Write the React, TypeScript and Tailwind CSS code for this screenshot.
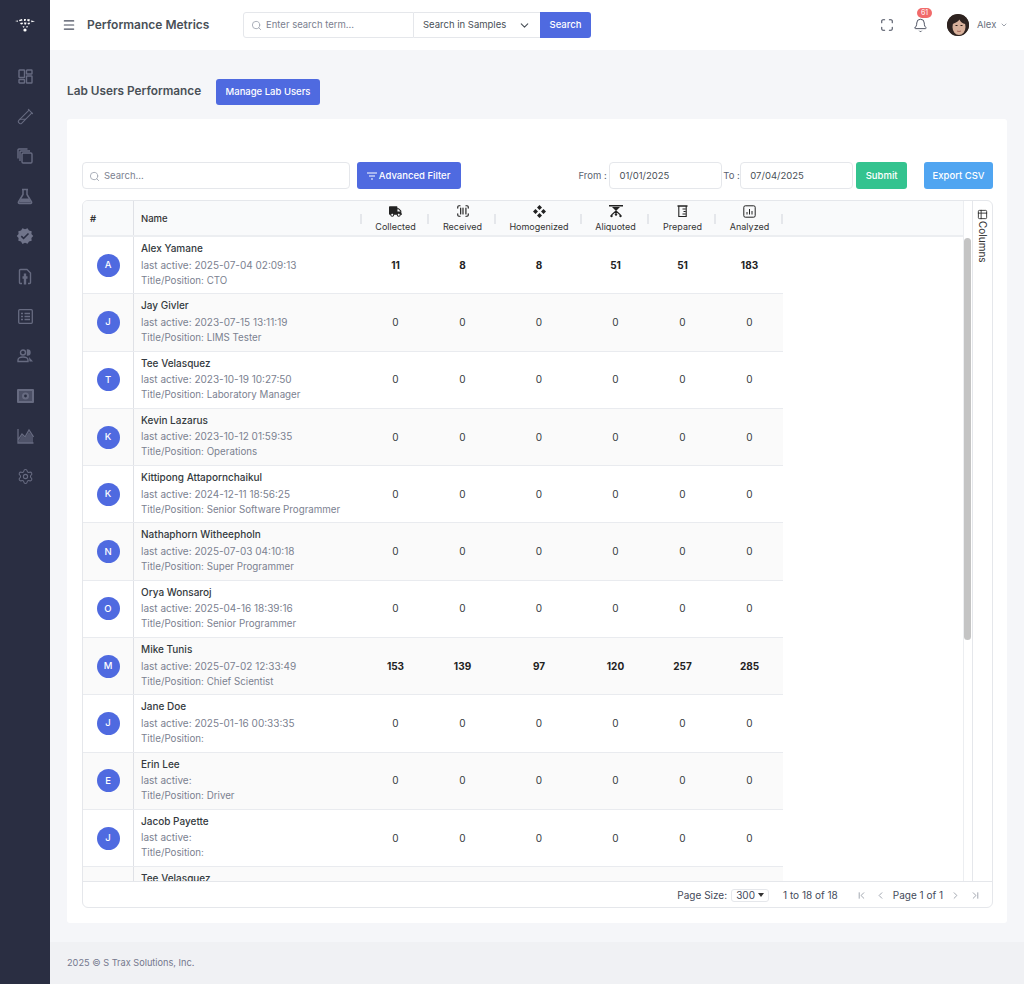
import {
  Bell, ChevronDown, ChevronFirst, ChevronLast, ChevronLeft, ChevronRight,
  Maximize, Menu, Search, Settings, Table2, TestTubeDiagonal, ScanBarcode,
} from 'lucide-react';
import { FaTruck } from 'react-icons/fa';
import { MdVerified } from 'react-icons/md';

const users = [
  { name: 'Alex Yamane', active: '2025-07-04 02:09:13', title: 'CTO', v: [11, 8, 8, 51, 51, 183] },
  { name: 'Jay Givler', active: '2023-07-15 13:11:19', title: 'LIMS Tester' },
  { name: 'Tee Velasquez', active: '2023-10-19 10:27:50', title: 'Laboratory Manager' },
  { name: 'Kevin Lazarus', active: '2023-10-12 01:59:35', title: 'Operations' },
  { name: 'Kittipong Attapornchaikul', active: '2024-12-11 18:56:25', title: 'Senior Software Programmer' },
  { name: 'Nathaphorn Witheepholn', active: '2025-07-03 04:10:18', title: 'Super Programmer' },
  { name: 'Orya Wonsaroj', active: '2025-04-16 18:39:16', title: 'Senior Programmer' },
  { name: 'Mike Tunis', active: '2025-07-02 12:33:49', title: 'Chief Scientist', v: [153, 139, 97, 120, 257, 285] },
  { name: 'Jane Doe', active: '2025-01-16 00:33:35', title: '' },
  { name: 'Erin Lee', active: '', title: 'Driver' },
  { name: 'Jacob Payette', active: '', title: '' },
];

const colWidths = ['w-[67px]', 'w-[67px]', 'w-[86px]', 'w-[67px]', 'w-[67px]', 'w-[67px]'];

const sideColor = '#676b81';

const sideIcons = [
  <svg width="15" height="15" viewBox="0 0 15 15" fill="none" stroke={sideColor} strokeWidth="1.400">
    <rect x="1" y="1" width="5.500" height="7.500" rx=".6" />
    <rect x="8.500" y="1" width="5.500" height="4" rx=".6" />
    <rect x="1" y="10.500" width="5.500" height="3.500" rx=".6" />
    <rect x="8.500" y="7" width="5.500" height="7" rx=".6" />
  </svg>,
  <TestTubeDiagonal size={17} strokeWidth={1.500} color={sideColor} />,
  <svg width="16" height="16" viewBox="0 0 16 16" fill="none" stroke={sideColor} strokeWidth="1.400">
    <rect x="5" y="5" width="10" height="10" rx="1.200" />
    <path d="M3 13V4a1 1 0 0 1 1-1h9M1 10.500V2a1 1 0 0 1 1-1h8.500" />
  </svg>,
  <svg width="16" height="17" viewBox="0 0 16 17" fill="none" stroke={sideColor} strokeWidth="1.500">
    <path d="M5 1.500h6M6 1.500v5L1.500 14a1 1 0 0 0 1 1.500h11a1 1 0 0 0 1-1.500L10 6.500v-5" />
    <path d="M4 10.500h8l2 4H2z" fill={sideColor} stroke="none" />
  </svg>,
  <MdVerified size={18} color="#70748a" />,
  <svg width="14" height="17" viewBox="0 0 14 17" fill="none" stroke={sideColor} strokeWidth="1.400">
    <path d="M4 15.500H2.500a1 1 0 0 1-1-1v-12a1 1 0 0 1 1-1H9l3.500 3.500v9.500a1 1 0 0 1-1 1H10" />
    <path d="M7 5.500v11M4.500 9.500h5" strokeWidth="2.400" />
  </svg>,
  <svg width="15" height="15" viewBox="0 0 15 15" fill="none" stroke={sideColor} strokeWidth="1.300">
    <rect x=".7" y=".7" width="13.600" height="13.600" rx="1" />
    <path d="M3 4.500h2M3 7.500h2M3 10.500h2M6.500 4.500H12M6.500 7.500H12M6.500 10.500H12" />
  </svg>,
  <svg width="17" height="14" viewBox="0 0 17 14" fill="none" stroke={sideColor} strokeWidth="1.400">
    <circle cx="6" cy="3.500" r="2.500" />
    <path d="M1 12.500v-1.500c0-1.500 2-3 5-3s5 1.500 5 3v1.500z" />
    <path d="M10.500 1a2.500 2.500 0 0 1 0 5z" fill={sideColor} />
    <path d="M12 8l4 4.500h-3.500z" fill={sideColor} stroke="none" />
  </svg>,
  <svg width="17" height="14" viewBox="0 0 17 14">
    <rect width="17" height="14" rx="1" fill={sideColor} />
    <rect x="2" y="2" width="13" height="10" fill="#4c5066" />
    <circle cx="8.500" cy="7" r="3.500" fill={sideColor} />
    <circle cx="8.500" cy="7" r="1.400" fill="#2a2e42" />
  </svg>,
  <svg width="17" height="16" viewBox="0 0 17 16" fill="none">
    <path d="M1 14 5 7l3 3 4-6 4 5v6H1z" fill="#4f5369" />
    <path d="M1 1v14h15.500M1 12l4-6 3 3 4-7 4.500 7" stroke={sideColor} strokeWidth="1.300" />
  </svg>,
  <Settings size={17} strokeWidth={1.500} color={sideColor} />,
];

function Homogenize() {
  return (
    <svg width="13" height="13" viewBox="0 0 13 13" fill="#222">
      <path d="M6.5 0 9 2.500 6.500 5 4 2.500zM2.500 4 5 6.500 2.500 9 0 6.500zM10.500 4 13 6.500 10.500 9 8 6.500zM6.500 8 9 10.500 6.500 13 4 10.500z" />
    </svg>
  );
}

function Aliquot() {
  return (
    <svg width="14" height="13" viewBox="0 0 14 13" fill="none" stroke="#222" strokeWidth="1.100">
      <path d="M0 .8h14" strokeWidth="1.400" />
      <path d="M3 2h8L7 6z" fill="#222" stroke="none" />
      <path d="M7 6 2.500 10M7 6l4.500 4M7 6v2.500" />
      <circle cx="2.500" cy="11" r="1.200" fill="#222" stroke="none" />
      <circle cx="7" cy="9.500" r="1.200" fill="#222" stroke="none" />
      <circle cx="11.500" cy="11" r="1.200" fill="#222" stroke="none" />
    </svg>
  );
}

function Beaker() {
  return (
    <svg width="11" height="13" viewBox="0 0 11 13" fill="none" stroke="#222" strokeWidth="1.100">
      <path d="M.5 1h10" strokeWidth="1.400" />
      <path d="M1.800 1v10.500h7.400V1M5.500 4h3M6.500 6.500h2M5.500 9h3" />
    </svg>
  );
}

function Analyzed() {
  return (
    <svg width="13" height="13" viewBox="0 0 13 13" fill="none" stroke="#222" strokeWidth="1">
      <rect x=".8" y=".8" width="11.400" height="11.400" rx="1.500" />
      <path d="M4 9.500V7M6.500 9.500V4M9 9.500V6" />
    </svg>
  );
}

function FilterLines() {
  return (
    <svg width="10" height="8" viewBox="0 0 10 8" stroke="#fff" strokeWidth="1.100">
      <path d="M0 1h10M2 4h6M4 7h2" />
    </svg>
  );
}

function Logo() {
  return (
    <svg width="20" height="14" viewBox="0 0 20 14" fill="#fff">
      <path d="M0 3 3 2.500 3 3.800zM4 2l3-1 .5 1.500-3 .8zM5 5l2.500-.5.500 1.500-2 .5zM9 1l2 0-.5 2-1.500 0zM9 4.500h2.500l-.5 2H9.500zM12.500 1l2.500.5-.8 2-2-.8zM12.500 5l2-.5.500 1.500-2 .5zM16 2.500l4 .8-3.500 1zM7.500 8l2 .5-.8 1.500zM11 8.500l2-.5-1 2z" />
      <circle cx="10" cy="12" r="1.600" />
    </svg>
  );
}

function Face() {
  return (
    <svg width="22" height="22" viewBox="0 0 22 22" className="rounded-full">
      <rect width="22" height="22" fill="#4a3b33" />
      <path d="M0 22V8c1-5 5-8 11-8s10 3 11 8v14z" fill="#2e2320" />
      <ellipse cx="12" cy="13" rx="6.500" ry="8" fill="#d8b09a" />
      <path d="M5 10c2-.5 6-2 7.500-4.500 1 2.500 3 4 6 4.500L16 4H7z" fill="#2e2320" />
      <path d="M8.500 11.500H10.500M13.500 11.500h2" stroke="#2a1c16" strokeWidth="1" />
      <path d="M10 17c1.200.6 2.800.6 4 0" stroke="#a8685e" strokeWidth="1" fill="none" />
    </svg>
  );
}

function HeadCell({ label, icon, width }: { label: string; icon: React.ReactNode; width: string }) {
  return (
    <div className={`relative flex h-full shrink-0 flex-col items-center justify-center ${width}`}>
      <div className="flex h-[14px] items-center justify-center pt-[1px]">{icon}</div>
      <div className="mt-[3px] text-[9px] leading-[12px] text-[#333]">{label}</div>
      <span className="absolute right-0 top-[13px] h-[10px] w-[2px] bg-[#e5e7eb]" />
    </div>
  );
}

export default function App() {
  return (
    <div className="flex h-[984px] w-[1024px] overflow-hidden bg-[#f5f6f9] font-['Inter',sans-serif]">
      <aside className="flex w-[50px] shrink-0 flex-col items-center bg-[#2a2e42]">
        <div className="flex h-[50px] items-center justify-center"><Logo /></div>
        <nav className="mt-[17px] flex flex-col items-center gap-[22px]">
          {sideIcons.map((icon, i) => (
            <div key={i} className="flex h-[18px] w-[18px] items-center justify-center">{icon}</div>
          ))}
        </nav>
      </aside>

      <div className="flex min-w-0 flex-1 flex-col">
        <header className="flex h-[50px] shrink-0 items-center bg-white">
          <Menu size={14} strokeWidth={2} className="ml-[12px] text-[#444a5a]" />
          <h1 className="ml-[11px] w-[156px] text-[12px] font-semibold text-[#495057]">Performance Metrics</h1>
          <div className="flex h-[26px] w-[171px] items-center rounded-l-[3px] border border-[#e5e7eb] pl-[7px]">
            <Search size={11} className="text-[#a3a8b4]" />
            <span className="ml-[4px] text-[9.500px] text-[#7b8190]">Enter search term...</span>
          </div>
          <div className="flex h-[26px] w-[126px] items-center justify-between border-y border-[#e5e7eb] pl-[9px] pr-[9px]">
            <span className="text-[9.500px] text-[#495057]">Search in Samples</span>
            <ChevronDown size={13} className="text-[#495057]" />
          </div>
          <button className="h-[26px] w-[51px] rounded-r-[3px] bg-[#4f6ae0] text-[9.500px] font-medium text-white">Search</button>
          <Maximize size={14} strokeWidth={1.800} className="ml-[289px] text-[#444a5a]" />
          <div className="relative ml-[19px]">
            <Bell size={15} strokeWidth={1.500} className="text-[#444a5a]" />
            <span className="absolute left-[4px] top-[-10px] flex h-[10px] w-[15px] items-center justify-center rounded-full bg-[#f16a6a] text-[7px] leading-none text-white">61</span>
          </div>
          <div className="ml-[19px]"><Face /></div>
          <span className="ml-[8px] text-[9.500px] text-[#6b7280]">Alex</span>
          <ChevronDown size={8} className="ml-[4px] text-[#6b7280]" />
        </header>

        <main className="flex min-h-0 flex-1 flex-col pl-[17px] pr-[17px]">
          <div className="flex h-[69px] shrink-0 items-center pt-[15px]">
            <h2 className="w-[149px] text-[11.800px] font-semibold text-[#495057]">Lab Users Performance</h2>
            <button className="h-[26px] w-[104px] rounded-[3px] bg-[#4f6ae0] text-[9.500px] font-medium text-white">Manage Lab Users</button>
          </div>

          <section className="flex h-[804px] shrink-0 flex-col rounded-[3px] bg-white pb-[15px] pl-[15px] pr-[14px] pt-[43px]">
            <div className="flex h-[27px] shrink-0 items-center">
              <div className="flex h-full w-[268px] items-center rounded-[4px] border border-[#e5e7eb] pl-[6px] pt-[1px]">
                <Search size={11} className="text-[#a3a8b4]" />
                <span className="ml-[4px] text-[9.500px] text-[#7b8190]">Search...</span>
              </div>
              <button className="ml-[7px] flex h-full w-[104px] items-center justify-center gap-[2px] rounded-[3px] bg-[#4f6ae0] pt-[1px] text-[9.500px] font-medium text-white">
                <FilterLines /> Advanced Filter
              </button>
              <span className="ml-[118px] w-[31px] pt-[1px] text-[9.500px] text-[#5b6270]">From :</span>
              <div className="flex h-full w-[113px] items-center rounded-[4px] border border-[#e5e7eb] pl-[9px] pt-[1px] text-[9.500px] text-[#495057]">01/01/2025</div>
              <span className="w-[18px] pl-[1px] pt-[1px] text-[9.500px] text-[#5b6270]">To :</span>
              <div className="flex h-full w-[113px] items-center rounded-[4px] border border-[#e5e7eb] pl-[9px] pt-[1px] text-[9.500px] text-[#495057]">07/04/2025</div>
              <button className="ml-[3px] h-full w-[51px] rounded-[3px] bg-[#34c38f] pt-[1px] text-[9.500px] font-medium text-white">Submit</button>
              <button className="ml-[17px] h-full w-[69px] rounded-[3px] bg-[#50a5f1] pt-[1px] text-[9.500px] font-medium text-white">Export CSV</button>
            </div>

            <div className="mt-[11px] flex min-h-0 flex-1 flex-col overflow-hidden rounded-[6px] border border-[#e5e7eb]">
              <div className="flex min-h-0 flex-1">
                <div className="flex min-w-0 flex-1 flex-col">
                  <div className="flex h-[36px] shrink-0 items-center border-b-2 border-[#eceef1] bg-[#f9fafb]">
                    <div className="flex h-full w-[51px] shrink-0 items-center border-r border-[#dfe1e6] pl-[7px] pt-[2px] text-[9.500px] font-semibold text-[#333]">#</div>
                    <div className="relative flex h-full w-[228px] shrink-0 items-center pl-[7px] pt-[2px] text-[9.500px] font-medium text-[#333]">
                      Name
                      <span className="absolute right-0 top-[13px] h-[10px] w-[2px] bg-[#e5e7eb]" />
                    </div>
                    <HeadCell label="Collected" width={colWidths[0]} icon={<FaTruck size={13} color="#222" />} />
                    <HeadCell label="Received" width={colWidths[1]} icon={<ScanBarcode size={14} color="#222" />} />
                    <HeadCell label="Homogenized" width={colWidths[2]} icon={<Homogenize />} />
                    <HeadCell label="Aliquoted" width={colWidths[3]} icon={<Aliquot />} />
                    <HeadCell label="Prepared" width={colWidths[4]} icon={<Beaker />} />
                    <HeadCell label="Analyzed" width={colWidths[5]} icon={<Analyzed />} />
                  </div>
                  <div className="min-h-0 flex-1 overflow-hidden">
                    {users.map((u, i) => (
                      <div key={i} className={`flex h-[57.300px] w-[700px] items-stretch border-b border-[#e9ebef] ${i % 2 === 1 ? 'bg-[#fafafa]' : 'bg-white'}`}>
                        <div className="flex w-[51px] shrink-0 items-center justify-center border-r border-[#dfe1e6]">
                          <div className="flex h-[23px] w-[23px] items-center justify-center rounded-full bg-[#4f6ae0] text-[9.500px] font-medium text-white">{u.name[0]}</div>
                        </div>
                        <div className="w-[228px] shrink-0 pl-[7px] pt-[4px]">
                          <div className="text-[10px] leading-[15px] font-medium text-[#343a40]">{u.name}</div>
                          <div className="mt-[1.500px] text-[10px] leading-[15px] text-[#7b8190]">last active: {u.active}</div>
                          <div className="text-[9.750px] leading-[15px] text-[#7b8190]">Title/Position: {u.title}</div>
                        </div>
                        {colWidths.map((w, c) => (
                          <div key={c} className={`flex shrink-0 items-center justify-center text-[10px] ${w} ${u.v ? 'font-bold text-[#222]' : 'text-[#343a40]'}`}>
                            {u.v ? u.v[c] : 0}
                          </div>
                        ))}
                      </div>
                    ))}
                    {/* last visible row, cut by the pager */}
                    <div className="flex h-[57.300px] w-[700px] items-stretch bg-[#fafafa]">
                      <div className="w-[51px] shrink-0 border-r border-[#dfe1e6]" />
                      <div className="pl-[7px] pt-[4px] text-[10px] leading-[15px] font-medium text-[#343a40]">Tee Velasquez</div>
                    </div>
                  </div>
                </div>
                <div className="w-[9px] shrink-0 border-l border-[#eceef1] bg-white pt-[37px]">
                  <div className="h-[402px] w-[7px] rounded-full bg-[#c4c4c4]" />
                </div>
                <div className="flex w-[20px] shrink-0 flex-col items-center border-l border-[#e5e7eb] pt-[8px]">
                  <Table2 size={11} className="text-[#333]" />
                  <span className="mt-[1px] text-[10px] leading-[12px] text-[#333] [writing-mode:vertical-lr]">Columns</span>
                </div>
              </div>
              <div className="flex h-[26px] shrink-0 items-center justify-end border-t border-[#e5e7eb] pr-[11px] pt-[1px] text-[10px] text-[#444a5a]">
                <span>Page Size:</span>
                <div className="ml-[4px] flex h-[13px] w-[38px] items-center justify-center gap-[3px] rounded-[3px] border border-[#e5e7eb]">
                  300 <span className="h-0 w-0 border-x-[3px] border-t-[4px] border-x-transparent border-t-[#333]" />
                </div>
                <span className="ml-[14px]">1 to 18 of 18</span>
                <ChevronFirst size={11} className="ml-[18px] text-[#9aa0aa]" />
                <ChevronLeft size={11} className="ml-[8px] text-[#9aa0aa]" />
                <span className="ml-[7px]">Page 1 of 1</span>
                <ChevronRight size={11} className="ml-[7px] text-[#9aa0aa]" />
                <ChevronLast size={11} className="ml-[9px] text-[#9aa0aa]" />
              </div>
            </div>
          </section>
        </main>

        <footer className="flex h-[42px] shrink-0 items-center bg-[#f0f1f4] pl-[17px] text-[9.200px] text-[#74788d]">
          2025 © S Trax Solutions, Inc.
        </footer>
      </div>
    </div>
  );
}
